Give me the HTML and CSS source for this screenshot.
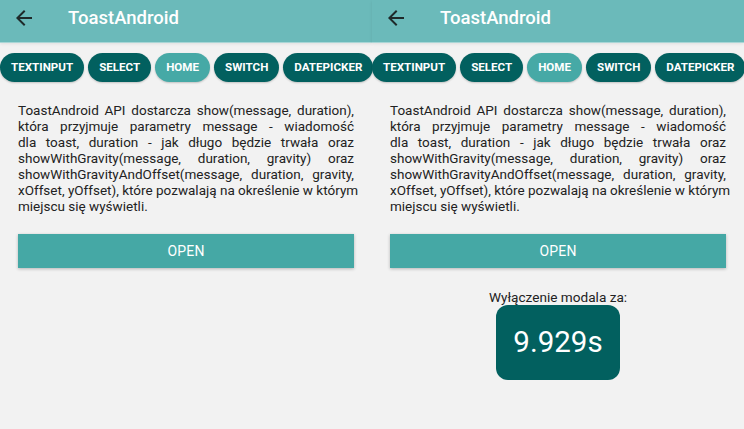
FILE: index.html
```html
<!DOCTYPE html>
<html>
<head>
<meta charset="utf-8">
<link rel="stylesheet" href="styles.css">
</head>
<body>
<div class="screen">
  <header class="appbar">
    <svg class="back" viewBox="0 0 24 24" width="24" height="24"><path d="M20 11H7.83l5.59-5.59L12 4l-8 8 8 8 1.41-1.41L7.83 13H20v-2z" fill="#1f2a2a"/></svg>
    <span class="title">ToastAndroid</span>
  </header>
  <nav class="tabs">
    <span class="tab">TEXTINPUT</span>
    <span class="tab">SELECT</span>
    <span class="tab active">HOME</span>
    <span class="tab">SWITCH</span>
    <span class="tab">DATEPICKER</span>
  </nav>
  <main class="content">
    <p class="desc"><span class="ln">ToastAndroid API dostarcza show(message, duration),</span> <span class="ln">która przyjmuje parametry message - wiadomość</span> <span class="ln">dla toast, duration - jak długo będzie trwała oraz</span> <span class="ln">showWithGravity(message, duration, gravity) oraz</span> <span class="ln">showWithGravityAndOffset(message, duration, gravity,</span> <span class="ln">xOffset, yOffset), które pozwalają na określenie w którym</span> <span class="ln last">miejscu się wyświetli.</span></p>
    <button class="open">OPEN</button>
  </main>
</div>
<div class="screen">
  <header class="appbar">
    <svg class="back" viewBox="0 0 24 24" width="24" height="24"><path d="M20 11H7.83l5.59-5.59L12 4l-8 8 8 8 1.41-1.41L7.83 13H20v-2z" fill="#1f2a2a"/></svg>
    <span class="title">ToastAndroid</span>
  </header>
  <nav class="tabs">
    <span class="tab">TEXTINPUT</span>
    <span class="tab">SELECT</span>
    <span class="tab active">HOME</span>
    <span class="tab">SWITCH</span>
    <span class="tab">DATEPICKER</span>
  </nav>
  <main class="content">
    <p class="desc"><span class="ln">ToastAndroid API dostarcza show(message, duration),</span> <span class="ln">która przyjmuje parametry message - wiadomość</span> <span class="ln">dla toast, duration - jak długo będzie trwała oraz</span> <span class="ln">showWithGravity(message, duration, gravity) oraz</span> <span class="ln">showWithGravityAndOffset(message, duration, gravity,</span> <span class="ln">xOffset, yOffset), które pozwalają na określenie w którym</span> <span class="ln last">miejscu się wyświetli.</span></p>
    <button class="open">OPEN</button>
    <div class="countdown">
      <span class="label">Wyłączenie modala za:</span>
      <div class="timer">9.929s</div>
    </div>
  </main>
</div>
</body>
</html>
```
FILE: styles.css
```css
html, body {
  margin: 0;
  padding: 0;
  background: #f2f2f2;
}
body {
  display: flex;
  width: 744px;
  height: 429px;
  overflow: hidden;
  font-family: Roboto, "Noto Sans", sans-serif;
}
.screen {
  width: 372px;
  flex: none;
  display: flex;
  flex-direction: column;
}
.appbar {
  height: 43px;
  box-sizing: border-box;
  background: #6bbaba;
  display: flex;
  align-items: flex-start;
  padding-top: 6px;
  border-bottom: 1px solid #a9d6d6;
  box-shadow: 0 1px 3px rgba(0,0,0,0.08);
}
.back {
  margin-left: 12px;
  flex: none;
}
.title {
  margin-left: 32px;
  color: #ffffff;
  font-size: 18.5px;
  font-weight: 500;
  line-height: 24px;
}
.tabs {
  display: flex;
  gap: 4px;
  margin-top: 10px;
  white-space: nowrap;
}
.tab {
  flex: none;
  height: 29px;
  box-sizing: border-box;
  padding: 0 11px;
  border-radius: 15px;
  background: #02605f;
  color: #ffffff;
  font-size: 11.6px;
  font-weight: 700;
  line-height: 29px;
  box-shadow: 0 1px 2px rgba(0,0,0,0.2);
}
.tab.active {
  background: #46a9a6;
}
.content {
  padding: 0 18px;
  display: flex;
  flex-direction: column;
}
.desc {
  margin: 20px 0 0;
  font-size: 13.5px;
  line-height: 16px;
  color: #222222;
}
.ln {
  display: block;
  white-space: nowrap;
  text-align: justify;
  text-align-last: justify;
}
.ln.last {
  text-align-last: left;
}
.open {
  margin-top: 20px;
  height: 34px;
  border: none;
  background: #45a8a5;
  color: #ffffff;
  font-family: Roboto, "Noto Sans", sans-serif;
  font-size: 14px;
  font-weight: 400;
  letter-spacing: 0.2px;
  box-shadow: 0 1px 3px rgba(0,0,0,0.25);
  padding: 0;
}
.countdown {
  display: flex;
  flex-direction: column;
  align-items: center;
  margin-top: 21px;
}
.label {
  font-size: 13.6px;
  line-height: 16px;
  color: #222222;
}
.timer {
  margin-top: 0;
  width: 124px;
  height: 75px;
  border-radius: 12px;
  background: #02605f;
  color: #ffffff;
  font-size: 29.5px;
  line-height: 75px;
  text-align: center;
}
```
